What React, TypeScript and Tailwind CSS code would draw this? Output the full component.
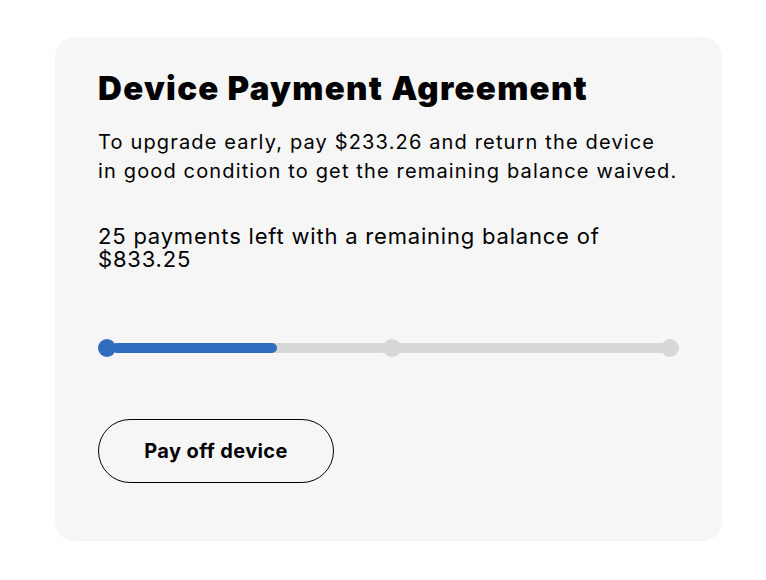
export default function App() {
  return (
    <div className="min-h-screen bg-white" style={{ fontFamily: "Inter, 'Noto Sans', sans-serif" }}>
      <div className="pt-[37px] pl-[55px]">
        <div className="flex h-[504px] w-[667px] flex-col items-start rounded-[20px] bg-[#f6f6f6] px-[43px] pt-[31px]">
          <h1 className="text-[33px] leading-[40px] font-black tracking-[1.3px] text-black">Device Payment Agreement</h1>
          <p className="mt-[20px] text-[20px] leading-[29px] tracking-[1.15px] text-black">
            To upgrade early, pay $233.26 and return the device
            <br />
            in good condition to get the remaining balance waived.
          </p>
          <p className="mt-[39px] w-[540px] text-[22px] leading-[23px] tracking-[0.8px] text-black">
            25 payments left with a remaining balance of $833.25
          </p>
          <div className="mt-[68px] flex items-center">
            <div className="z-10 h-[18px] w-[18px] rounded-full bg-[#2f6dbf]" />
            <div className="-mx-[4px] flex h-[10px] w-[275px] rounded-full bg-[#d8d8d8]">
              <div className="h-full w-[165px] rounded-full bg-[#2f6dbf]" />
            </div>
            <div className="z-10 h-[18px] w-[18px] rounded-full bg-[#d8d8d8]" />
            <div className="-mx-[4px] h-[10px] w-[268px] bg-[#d8d8d8]" />
            <div className="z-10 h-[18px] w-[18px] rounded-full bg-[#d8d8d8]" />
          </div>
          <button className="mt-[62px] flex h-[64px] w-[236px] items-center justify-center rounded-full border border-black text-[20px] font-bold tracking-[0.4px] text-black">
            Pay off device
          </button>
        </div>
      </div>
    </div>
  );
}
